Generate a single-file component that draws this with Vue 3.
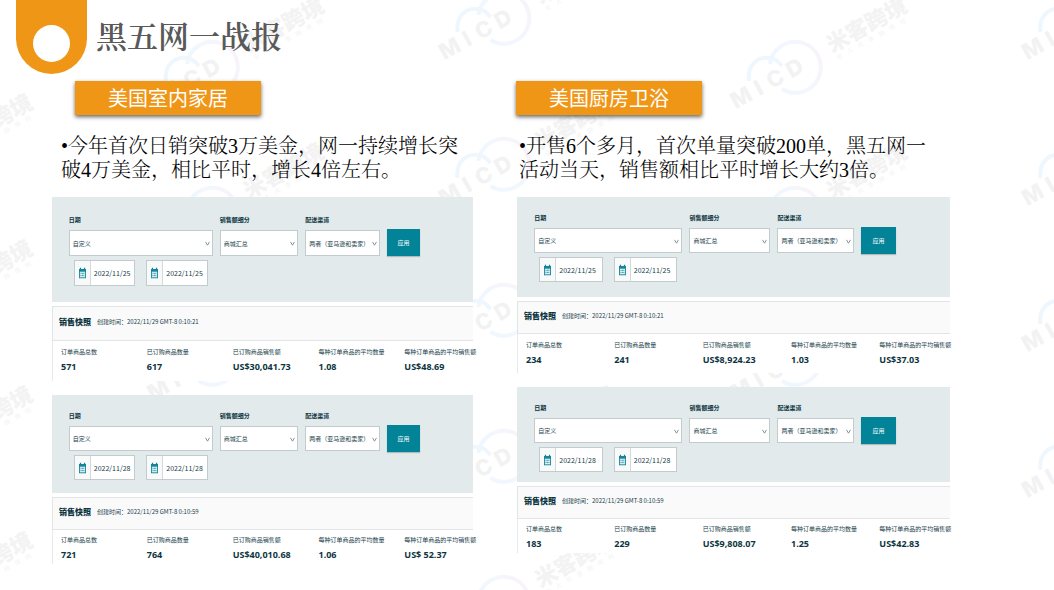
<script setup>
const marks = []
for (let col = -1; col < 4; col++) {
  const x = 212 + col * 291.5
  const top = col % 2 === 0 ? 67 : 18
  for (let row = 0; row < 5; row++) {
    const y = top + row * 146
    if (y < 620) marks.push({ x, y, brand: col >= 0, name: col < 3 })
  }
}

const labels = ['订单商品总数', '已订购商品数量', '已订购商品销售额', '每种订单商品的平均数量', '每种订单商品的平均销售额']

const columns = [
  {
    id: 'home',
    title: '美国室内家居',
    lines: ['•今年首次日销突破3万美金，网一持续增长突', '破4万美金，相比平时，增长4倍左右。'],
    reports: [
      { id: 'home-25', size: 'tall', date: '2022/11/25', time: '0:10:21', values: ['571', '617', 'US$30,041.73', '1.08', 'US$48.69'] },
      { id: 'home-28', size: 'mid', date: '2022/11/28', time: '0:10:59', values: ['721', '764', 'US$40,010.68', '1.06', 'US$ 52.37'] }
    ]
  },
  {
    id: 'kitchen',
    title: '美国厨房卫浴',
    lines: ['•开售6个多月，首次单量突破200单，黑五网一', '活动当天，销售额相比平时增长大约3倍。'],
    reports: [
      { id: 'kitchen-25', size: 'normal', date: '2022/11/25', time: '0:10:21', values: ['234', '241', 'US$8,924.23', '1.03', 'US$37.03'] },
      { id: 'kitchen-28', size: 'short', date: '2022/11/28', time: '0:10:59', values: ['183', '229', 'US$9,808.07', '1.25', 'US$42.83'] }
    ]
  }
]
</script>

<template>
  <main class="slide">
    <svg class="watermark" aria-hidden="true">
      <defs>
        <linearGradient id="ring" gradientUnits="userSpaceOnUse" x1="-20" y1="10" x2="25" y2="-10">
          <stop offset="0" stop-color="#eff7fe" />
          <stop offset="0.5" stop-color="#f3f7fe" />
          <stop offset="1" stop-color="#f8f3fa" />
        </linearGradient>
      </defs>
      <g v-for="(m, i) in marks" :key="i" :transform="`translate(${m.x} ${m.y})`">
        <path d="M-13 22 A25.5 25.5 0 1 0 -25 -3" fill="none" stroke="url(#ring)" stroke-width="4" />
        <path d="M-46 14 C-48 -1 -38 -11 -25 -9 C-19 -8 -16 -5 -13 -1" fill="none" stroke="#eff7fe" stroke-width="4" />
        <g v-if="m.brand" transform="translate(-59 42) rotate(-29)">
          <text class="brand" x="10 30 49 71" y="0">MICD</text>
        </g>
        <g v-if="m.name" transform="translate(37 -14) rotate(-29)">
          <text class="brand-cn" x="0" y="0">米客跨境</text>
          <text class="brand-sub" x="2 14 26 38 50 62 74" y="9">全人共享跨境网</text>
        </g>
      </g>
    </svg>

    <header class="top">
      <div class="tab"><span class="hole"></span></div>
      <h1>黑五网一战报</h1>
    </header>

    <div class="columns">
      <section v-for="c in columns" :key="c.id" class="column" :class="c.id">
        <h2>{{ c.title }}</h2>
        <p class="summary">
          <span v-for="l in c.lines" :key="l">{{ l }}</span>
        </p>
        <article v-for="r in c.reports" :key="r.id" class="report" :class="r.size">
          <form class="filters" @submit.prevent>
            <div class="field">
              <label :for="r.id + '-range'">日期</label>
              <div class="pick">
                <select :id="r.id + '-range'"><option>自定义</option></select>
                <svg viewBox="0 0 6 6"><path d="M0.6 1 L3 5 L5.4 1" /></svg>
              </div>
              <div class="dates">
                <div v-for="n in 2" :key="n" class="date">
                  <svg viewBox="0 0 8 12">
                    <path d="M0 1.5H1V0H2.4V1.5H5.6V0H7V1.5H8V12H0Z" fill="#16859b" />
                    <path d="M1 4.5H7V11H1Z" fill="#d5edf0" />
                    <path d="M1.8 6.4H6.2M1.8 8.8H6.2" stroke="#16859b" stroke-width="1" stroke-dasharray="1 .6" />
                  </svg>
                  <input type="text" :value="r.date" :aria-label="n === 1 ? '开始日期' : '结束日期'">
                </div>
              </div>
            </div>
            <div class="field">
              <label :for="r.id + '-split'">销售额细分</label>
              <div class="pick">
                <select :id="r.id + '-split'"><option>商城汇总</option></select>
                <svg viewBox="0 0 6 6"><path d="M0.6 1 L3 5 L5.4 1" /></svg>
              </div>
            </div>
            <div class="field">
              <label :for="r.id + '-channel'">配送渠道</label>
              <div class="pick">
                <select :id="r.id + '-channel'"><option>两者（亚马逊和卖家）</option></select>
                <svg viewBox="0 0 6 6"><path d="M0.6 1 L3 5 L5.4 1" /></svg>
              </div>
            </div>
            <button type="submit">应用</button>
          </form>
          <div class="caption">
            <h3>销售快照</h3>
            <span>创建时间：2022/11/29 GMT-8 {{ r.time }}</span>
          </div>
          <dl class="stats">
            <div v-for="(v, i) in r.values" :key="i">
              <dt>{{ labels[i] }}</dt>
              <dd>{{ v }}</dd>
            </div>
          </dl>
        </article>
      </section>
    </div>
  </main>
</template>

<style>
body { margin: 0; background: #fff; }
</style>

<style scoped>
* { box-sizing: border-box; }
.slide {
  position: relative;
  min-height: 100vh;
  overflow: hidden;
  isolation: isolate;
  font-family: "Noto Sans CJK SC", sans-serif;
}
.watermark { position: absolute; inset: 0; width: 100%; height: 100%; z-index: -1; }
.brand { font: 800 22px Inter, sans-serif; fill: #f2f2f3; text-anchor: middle; }
.brand-cn { font: 900 22px "Noto Sans CJK SC", sans-serif; fill: #f3f3f3; }
.brand-sub { font: 6px "Noto Sans CJK SC", sans-serif; fill: #f4f4f4; }

.top { display: flex; align-items: flex-start; gap: 9px; height: 81px; padding-left: 16px; }
.tab {
  display: flex;
  justify-content: center;
  align-items: flex-end;
  width: 71px;
  height: 74px;
  padding-bottom: 12px;
  border-radius: 0 0 36px 36px;
  background: #f09617;
}
.hole { width: 37px; height: 37px; border-radius: 50%; background: #fff; }
h1 {
  margin: 12px 0 0;
  font: 600 31px/46px "Noto Serif CJK SC", "Noto Sans CJK SC", serif;
  color: #595959;
}

.columns {
  display: grid;
  grid-template-columns: 421fr 433fr;
  gap: 44px;
  padding: 0 104px 24px 52px;
}
.column { min-width: 0; }
h2 {
  width: 186px;
  margin: 0 0 19px 23px;
  background: #f09617;
  box-shadow: 0 2px 4px #0009;
  color: #fff;
  font: 400 20px/34px "Noto Sans CJK SC", sans-serif;
  text-align: center;
}
.summary {
  margin: 0 0 15px 9px;
  font: 300 20px/24px "Liberation Serif", "Noto Serif CJK SC", "Noto Sans CJK SC", serif;
  color: #000;
  white-space: nowrap;
}
.summary span { display: block; }
.kitchen h2 { margin-left: -1px; }
.kitchen .summary { margin-left: 2px; }

.report { background: #fff; color: #17404a; }
.report + .report { margin-top: 14px; }
.filters {
  display: grid;
  grid-template-columns: 141fr 77fr 73fr 33fr;
  column-gap: 2%;
  align-items: start;
  padding: 16px 12.5% 0 4%;
  background: #e2eaec;
}
.field { min-width: 0; }
label { display: block; height: 17px; font-size: 6px; line-height: 14px; font-weight: 700; color: #0c3440; white-space: nowrap; }
.pick { position: relative; }
select, input, button { margin: 0; font: inherit; color: inherit; border-radius: 0; }
select {
  display: block;
  appearance: none;
  width: 100%;
  height: 26px;
  padding: 0 0 0 3px;
  border: 1px solid #c2cbce;
  background: #fff;
  font-size: 6px;
}
.pick svg { position: absolute; right: 3px; top: calc(50% - 2px); width: 5px; height: 5px; pointer-events: none; }
.pick path { fill: none; stroke: #6d7f84; stroke-width: 1; }
.dates { display: flex; gap: 11px; margin-top: 4px; padding: 0 5px; }
.date {
  display: flex;
  align-items: center;
  flex: 1;
  min-width: 0;
  height: 26px;
  border: 1px solid #c2cbce;
  background: #f8f9f9;
}
.date svg { flex: none; width: 7px; height: 12px; margin: 0 4px; }
input {
  flex: 1;
  min-width: 0;
  height: 100%;
  padding: 0 0 0 3px;
  border: 0;
  border-left: 1px solid #d3dadc;
  background: #fff;
  font-size: 7px;
}
button {
  height: 27px;
  margin-top: 16px;
  padding: 0;
  border: 0;
  background: #028398;
  box-shadow: 0 1px 1px #0003;
  color: #fff;
  font-size: 6px;
}
.caption {
  display: flex;
  align-items: center;
  gap: 6px;
  height: 35px;
  margin-top: 4px;
  padding: 0 0 4px 6px;
  border: solid #e2e4e5;
  border-width: 1px 0 1px 1px;
  background: #fafafa;
  white-space: nowrap;
}
h3 { margin: 0; font-size: 8px; line-height: 12px; font-weight: 900; color: #0c3440; }
.caption span { font-size: 6px; line-height: 12px; }
.stats {
  display: grid;
  grid-template-columns: repeat(4, minmax(0, 5fr)) minmax(0, 4fr);
  margin: 0;
  padding: 4px 0 0 8px;
  border-left: 1px solid #e8eaea;
  white-space: nowrap;
}
dt { font-size: 6px; line-height: 14px; }
dd { margin: 0; font: 700 9px/16px "Open Sans", sans-serif; color: #0c3440; }

.tall .filters { height: 105px; }
.tall .stats { height: 40px; }
.mid .filters { height: 98px; padding-top: 14px; }
.mid .stats { height: 34px; padding-top: 3px; }
.normal .filters { height: 100px; padding-top: 14px; }
.normal .stats { height: 39px; }
.short .filters { height: 95px; padding-top: 14px; }
.short .stats { height: 34px; padding-top: 3px; }
.mid .caption, .normal .caption, .short .caption { height: 33px; }
.mid select, .mid .date, .normal select, .normal .date, .short select, .short .date { height: 25px; }
</style>
